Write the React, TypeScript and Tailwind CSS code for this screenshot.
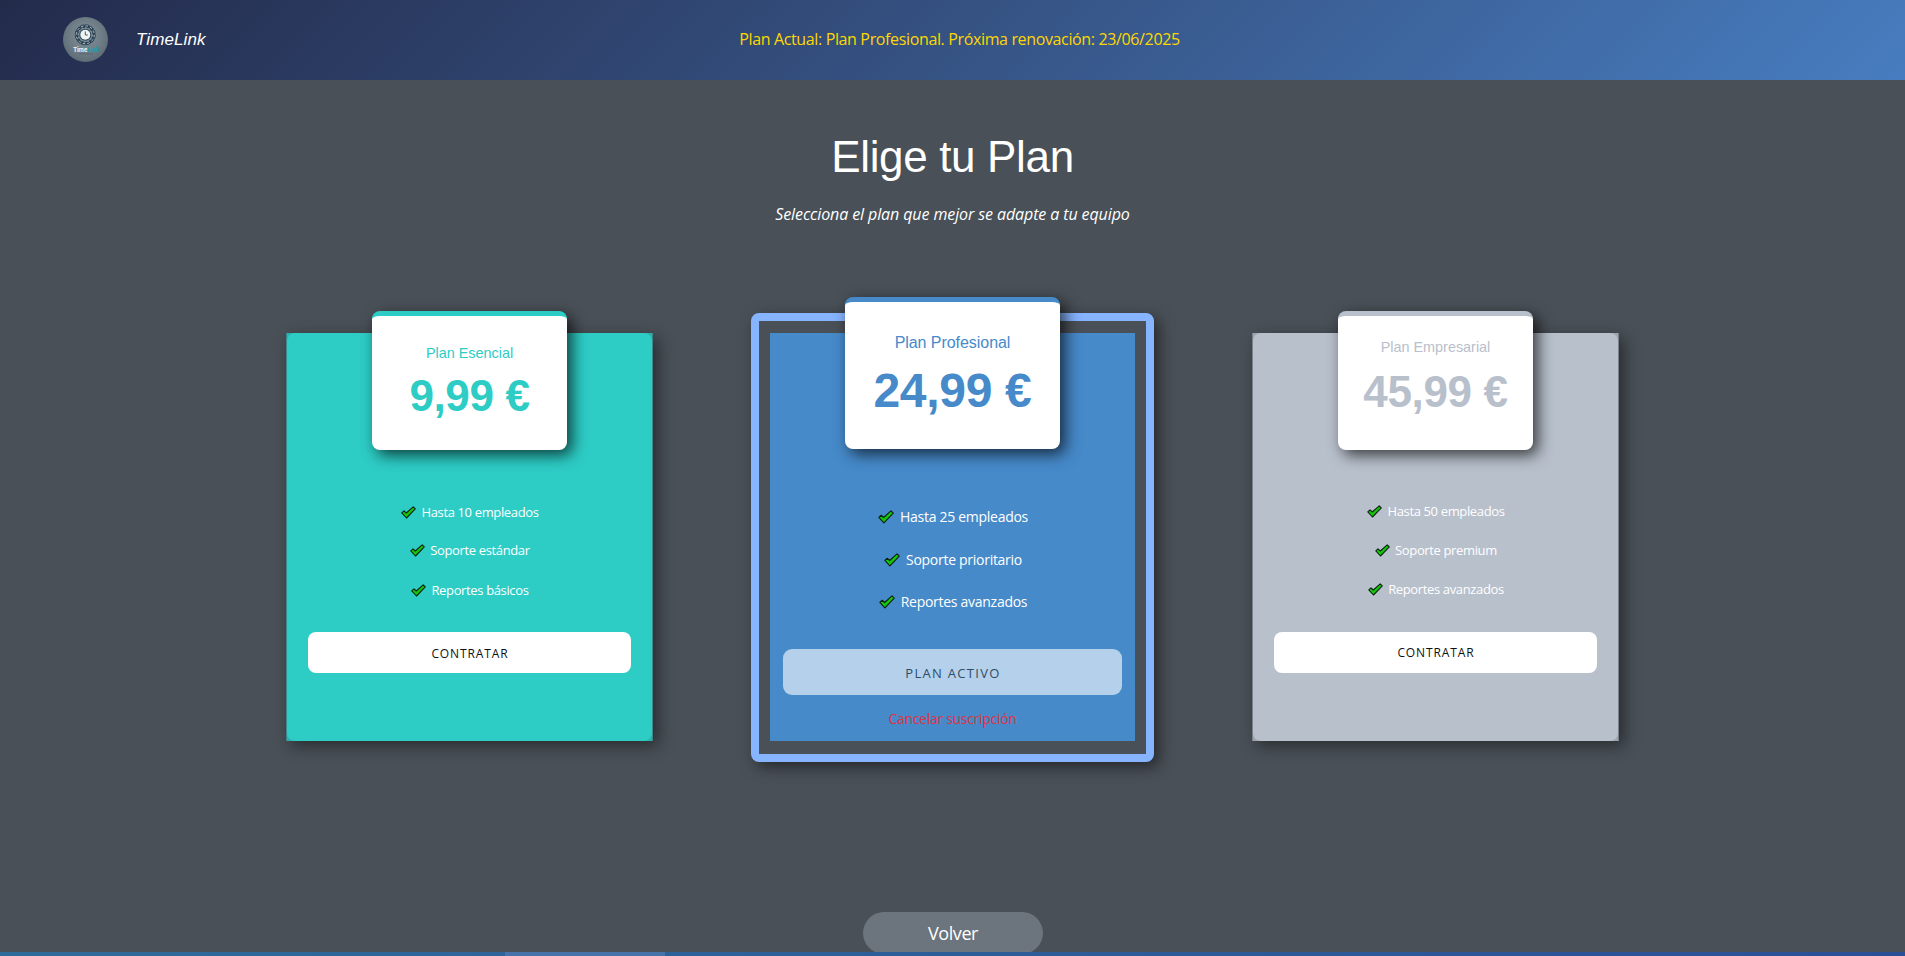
import React from "react";
import clsx from "clsx";

type Plan = {
  name: string;
  price: string;
  features: string[];
  rowMargins: string[];
  panel: string;
  edge: string;
  accent: string;
  topBorder: string;
  tagPadding: string;
  priceMargin: string;
  listMargin: string;
  buttonMargin: string;
  buttonPadding: string;
};

const essential: Plan = {
  name: "Plan Esencial",
  price: "9,99 €",
  features: ["Hasta 10 empleados", "Soporte estándar", "Reportes básicos"],
  rowMargins: ["", "mt-[18px]", "mt-5"],
  panel: "bg-[#2dccc5]",
  edge: "bg-[#2cb0ac] border-[#3a8a8b]",
  accent: "text-[#2dccc5]",
  topBorder: "border-[#2dccc5]",
  tagPadding: "pt-[27px]",
  priceMargin: "mt-2",
  listMargin: "mt-[52px]",
  buttonMargin: "mt-8",
  buttonPadding: "pt-[2px]",
};

const business: Plan = {
  name: "Plan Empresarial",
  price: "45,99 €",
  features: ["Hasta 50 empleados", "Soporte premium", "Reportes avanzados"],
  rowMargins: ["", "mt-[19px]", "mt-[19px]"],
  panel: "bg-[#b8c0cc]",
  edge: "bg-[#9ea5b0] border-[#7b828b]",
  accent: "text-[#b8c0cc]",
  topBorder: "border-[#b8c0cc]",
  tagPadding: "pt-[21px]",
  priceMargin: "mt-[10px]",
  listMargin: "mt-[51px]",
  buttonMargin: "mt-[33px]",
  buttonPadding: "",
};

function Check({ className }: { className: string }) {
  return (
    <svg viewBox="0 0 15 13" className={clsx("shrink-0", className)} aria-hidden="true">
      <path
        d="M0.8 6.9 L3 4.9 L5.3 7 L12.2 0.8 L14.3 2.8 L5.5 12 Z"
        fill="#16c60c"
        stroke="#0b2411"
        strokeWidth="1.1"
        strokeLinejoin="round"
      />
    </svg>
  );
}

function Logo() {
  return (
    <svg viewBox="0 0 45 45" className="size-[45px] shrink-0" role="img" aria-label="TimeLink">
      <defs>
        <radialGradient id="disc" cx="0.5" cy="0.42" r="0.6">
          <stop offset="0" stopColor="#84919a" />
          <stop offset="0.6" stopColor="#6f7d86" />
          <stop offset="1" stopColor="#5c6a73" />
        </radialGradient>
      </defs>
      <circle cx="22.5" cy="22.5" r="22.5" fill="url(#disc)" />
      <circle cx="22.3" cy="17.8" r="8.6" fill="none" stroke="#2b4252" strokeWidth="3" />
      <circle cx="22.3" cy="17.8" r="10" fill="none" stroke="#2b4252" strokeWidth="1" strokeDasharray="4 1.2" />
      <circle cx="22.3" cy="17.8" r="9" fill="none" stroke="#b9c7cd" strokeWidth="0.9" strokeDasharray="2.6 2.1" />
      <circle cx="22.3" cy="17.8" r="7.2" fill="none" stroke="#a3b4bc" strokeWidth="0.8" strokeDasharray="1.8 1.9" />
      <circle cx="22.3" cy="17.8" r="6" fill="#2b4353" />
      <circle cx="22.3" cy="17.8" r="5" fill="#eef3f4" />
      <path d="M22.3 14.4 V18 H24.8" fill="none" stroke="#3b4f5c" strokeWidth="0.9" />
      <path d="M22.3 28 V30.4" stroke="#1f9fac" strokeWidth="0.9" />
      <text
        x="10.2"
        y="34.8"
        fill="#f1f5f6"
        fontFamily="Roboto, sans-serif"
        fontWeight="700"
        fontSize="6.6"
        textLength="25.6"
        lengthAdjust="spacingAndGlyphs"
      >
        Time<tspan fill="#1c9eab">Link</tspan>
      </text>
      <path d="M16 36.8 H30" stroke="#51606a" strokeWidth="0.7" />
    </svg>
  );
}

function PlanCard({ plan }: { plan: Plan }) {
  return (
    <article
      className={clsx(
        "mt-9 flex h-[408px] w-[367px] flex-col border-x shadow-[5px_5px_15px_rgba(0,0,0,0.45)]",
        plan.edge,
      )}
    >
      <div className={clsx("flex h-[408px] flex-col items-center rounded-lg", plan.panel)}>
        <div
          className={clsx(
            "-mt-[22px] flex h-[139px] w-[195px] shrink-0 flex-col items-center rounded-lg border-t-[5px] bg-white font-['Liberation_Sans',sans-serif] shadow-[5px_5px_15px_rgba(0,0,0,0.7)]",
            plan.topBorder,
            plan.accent,
            plan.tagPadding,
          )}
        >
          <h2 className="text-[14.4px] leading-5">{plan.name}</h2>
          <p className={clsx("text-[44px] leading-[50px] font-bold tracking-[-0.35px]", plan.priceMargin)}>
            {plan.price}
          </p>
        </div>
        <ul className={clsx("-mt-px flex flex-col items-center", plan.listMargin)}>
          {plan.features.map((feature, i) => (
            <li key={feature} className={clsx("ml-px flex h-5 items-center gap-[5px]", plan.rowMargins[i])}>
              <Check className="mt-px h-[13px] w-[15px]" />
              <span className="text-[13px] leading-5 tracking-[-0.36px]">{feature}</span>
            </li>
          ))}
        </ul>
        <button
          className={clsx(
            "h-[41px] w-[323px] shrink-0 rounded-lg bg-white pl-px text-[12px] tracking-[0.9px] text-[#111]",
            plan.buttonMargin,
            plan.buttonPadding,
          )}
        >
          CONTRATAR
        </button>
      </div>
    </article>
  );
}

function ActivePlanCard() {
  return (
    <article className="mt-4 flex h-[449px] w-[403px] flex-col items-center rounded-lg border-8 border-[#86b4fe] bg-[#495057] pt-3 shadow-[5px_5px_15px_rgba(0,0,0,0.5)]">
      <div className="flex h-[408px] w-[365px] flex-col items-center bg-[#468aca]">
        <div className="-mt-9 flex h-[152px] w-[215px] shrink-0 flex-col items-center rounded-lg border-t-[5px] border-[#468aca] bg-white pt-[31px] font-['Liberation_Sans',sans-serif] text-[#468aca] shadow-[5px_5px_16px_rgba(0,0,0,0.7)]">
          <h2 className="text-base leading-5 tracking-[-0.05px]">Plan Profesional</h2>
          <p className="mt-[13px] text-[48px] leading-[50px] font-bold tracking-[-0.3px]">24,99 €</p>
        </div>
        <ul className="mt-[58px] flex flex-col items-center">
          {["Hasta 25 empleados", "Soporte prioritario", "Reportes avanzados"].map((feature, i) => (
            <li
              key={feature}
              className={clsx("ml-px flex h-5 items-center gap-1.5", i === 1 && "mt-[23px]", i === 2 && "mt-[22px]")}
            >
              <Check className="h-[14px] w-[16px]" />
              <span className="text-[14px] leading-5 tracking-[-0.28px]">{feature}</span>
            </li>
          ))}
        </ul>
        <button
          disabled
          className="mt-[37px] h-[46px] w-[339px] shrink-0 rounded-[9px] bg-[#b5d0ea] pt-1 pl-px text-[13px] tracking-[1.3px] text-[#2e4d68]"
        >
          PLAN ACTIVO
        </button>
        <button className="mt-[14px] text-[14px] leading-5 tracking-[-0.3px] text-[#dc3545]">
          Cancelar suscripción
        </button>
      </div>
    </article>
  );
}

export default function App() {
  return (
    <div className="flex h-[956px] flex-col overflow-hidden bg-[#495057] font-['Open_Sans','Noto_Sans',sans-serif] text-white">
      <header className="grid h-20 shrink-0 grid-cols-[1fr_auto_1fr] items-center bg-linear-135 from-[#232b4b] to-[#477dc0] pr-[49px] pb-[2px] pl-[63px]">
        <div className="flex items-center gap-7">
          <Logo />
          <span className="pt-[2px] font-['Liberation_Sans',sans-serif] text-[17px] tracking-[0.1px] italic">
            TimeLink
          </span>
        </div>
        <p className="text-base tracking-[-0.36px] whitespace-nowrap text-[#ffd700]">
          Plan Actual: Plan Profesional. Próxima renovación: 23/06/2025
        </p>
      </header>

      <main className="flex h-[872px] shrink-0 flex-col items-center overflow-hidden">
        <h1 className="mt-[51px] font-['Liberation_Sans',sans-serif] text-[44px] leading-[52px] tracking-[-0.35px]">
          Elige tu Plan
        </h1>
        <p className="mt-[19px] text-base leading-6 tracking-[-0.1px] italic">
          Selecciona el plan que mejor se adapte a tu equipo
        </p>

        <section className="mt-[71px] flex h-[465px] shrink-0 items-start gap-[98px]">
          <PlanCard plan={essential} />
          <ActivePlanCard />
          <PlanCard plan={business} />
        </section>

        <button className="mt-[150px] h-[42px] w-[180px] shrink-0 rounded-full bg-[#6c757d] pl-px text-[18px] leading-[42px] tracking-[-0.4px]">
          Volver
        </button>
      </main>

      <footer className="flex h-1 shrink-0 bg-linear-to-r from-[#2f6b9a] to-[#2b4f97] pl-[505px]">
        <div className="h-1 w-40 bg-[#4673aa]" />
      </footer>
    </div>
  );
}
